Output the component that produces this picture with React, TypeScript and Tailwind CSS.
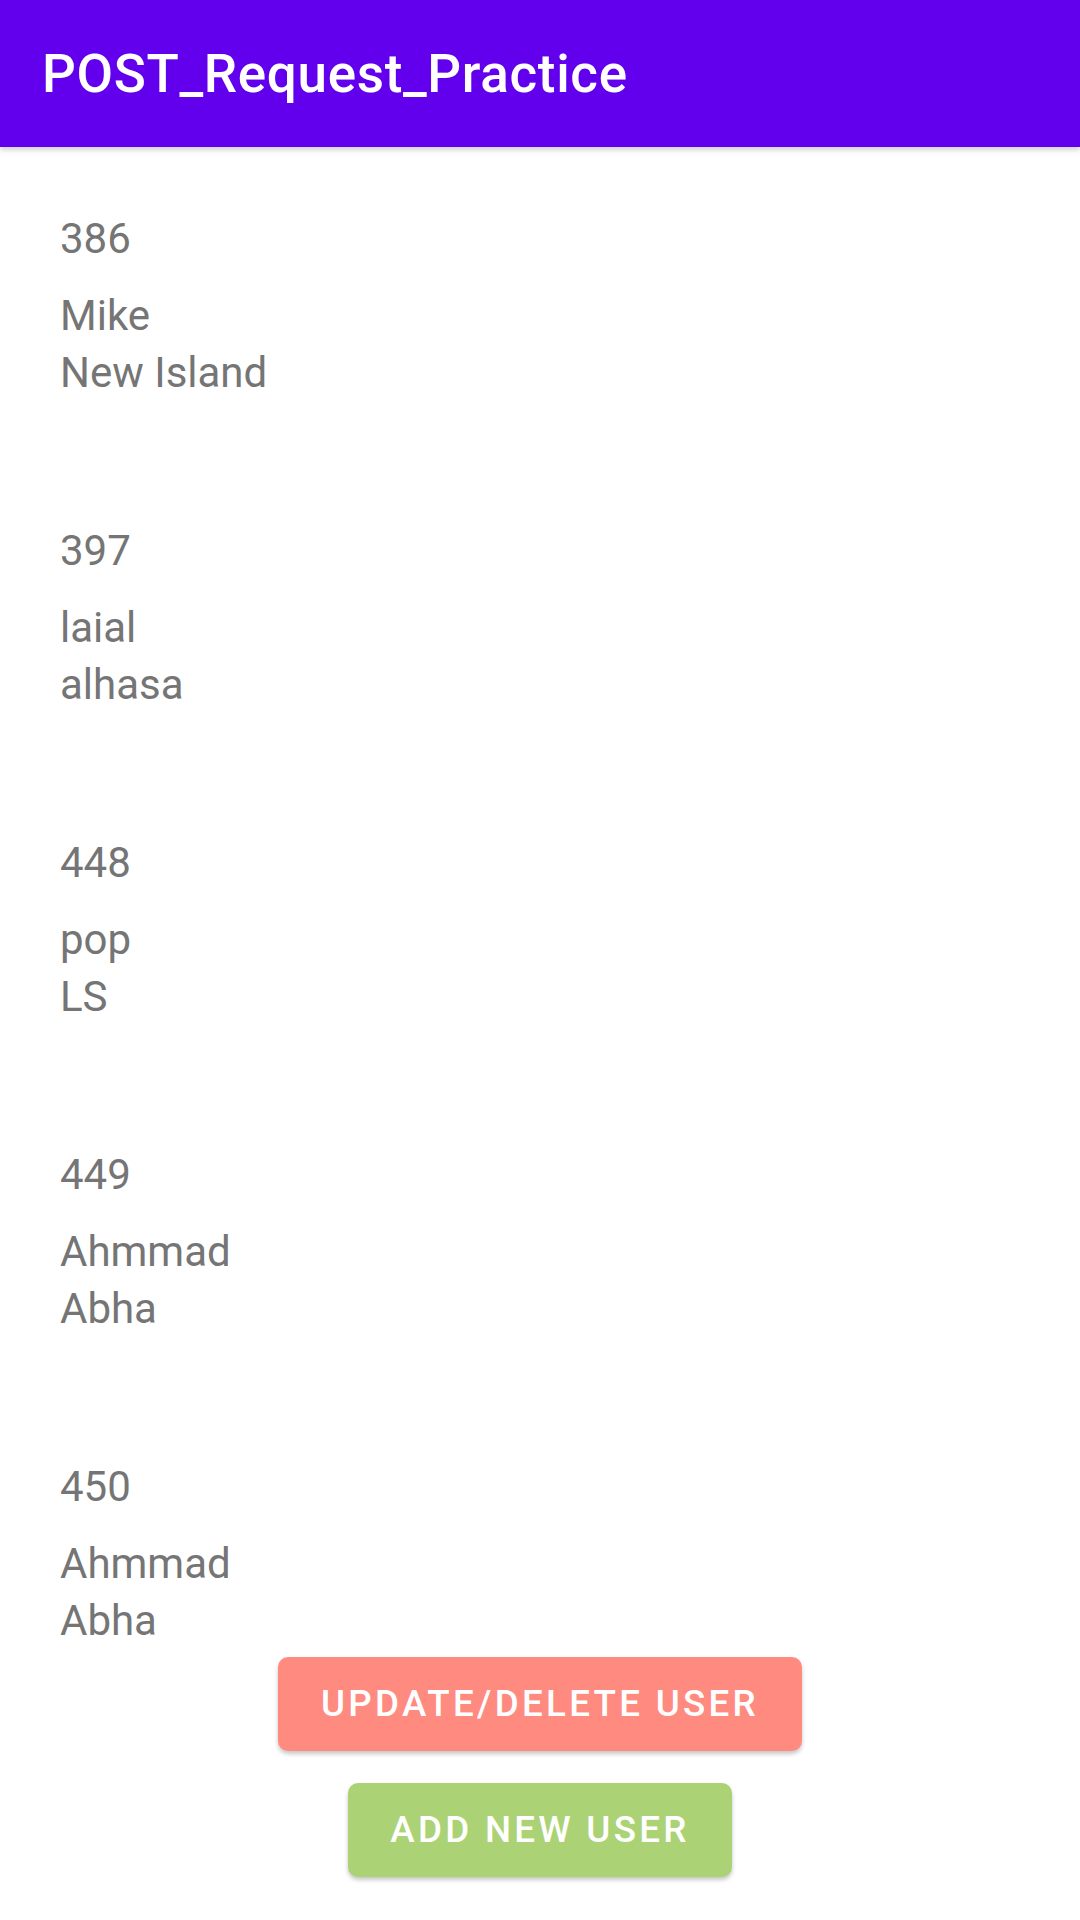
const users = [
  { id: 386, name: "Mike", address: "New Island" },
  { id: 397, name: "laial", address: "alhasa" },
  { id: 448, name: "pop", address: "LS" },
  { id: 449, name: "Ahmmad", address: "Abha" },
  { id: 450, name: "Ahmmad", address: "Abha" },
];

export default function App() {
  return (
    <div
      className="w-[1080px] h-[1920px] bg-white flex flex-col overflow-hidden"
      style={{ fontFamily: "Roboto, 'Noto Sans', sans-serif" }}
    >
      {/* Toolbar */}
      <header className="h-[147px] shrink-0 bg-[#6200ee] flex items-center pl-[42px] shadow-[0_3px_5px_rgba(0,0,0,0.18)] relative z-10">
        <h1 className="text-white text-[53px] leading-[62px] font-medium tracking-[0.0125em]">
          POST_Request_Practice
        </h1>
      </header>

      {/* User list */}
      <div className="flex-1 min-h-0">
        {users.map((user) => (
          <div
            key={user.id}
            className="h-[312px] pt-[63px] pl-[60px] text-[42px] leading-[57px] text-[#757575]"
          >
            <p>{user.id}</p>
            <p className="mt-[20px]">{user.name}</p>
            <p>{user.address}</p>
          </div>
        ))}
      </div>

      {/* Actions */}
      <div className="shrink-0 flex flex-col items-center pb-[27px] relative">
        <div className="py-[16px]">
          <button className="h-[94px] px-[43px] rounded-[10px] bg-[#ff8a80] text-white text-[36.75px] font-medium tracking-[0.0892em] uppercase shadow-[0_3px_4px_rgba(0,0,0,0.22)]">
            Update/Delete User
          </button>
        </div>
        <div className="py-[16px]">
          <button className="h-[94px] px-[42px] rounded-[10px] bg-[#abd375] text-white text-[36.75px] font-medium tracking-[0.0892em] uppercase shadow-[0_3px_4px_rgba(0,0,0,0.22)]">
            Add New User
          </button>
        </div>
      </div>
    </div>
  );
}
